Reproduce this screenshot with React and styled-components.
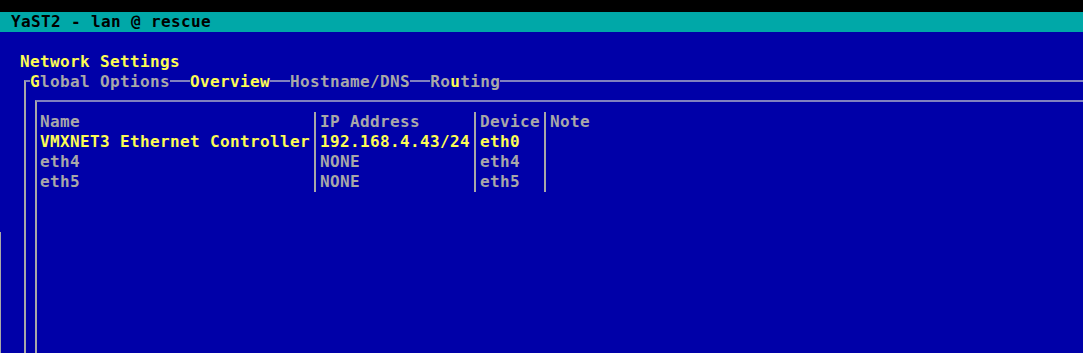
import styled, { createGlobalStyle } from 'styled-components';

//terminal palette
const BLUE = '#0000a8';
const CYAN = '#00a8a8';
const GRAY = '#a8a8a8';
const YELLOW = '#fcfc54';
const RULE = '#8080c0';

const GlobalStyle = createGlobalStyle`
    html, body {
        margin: 0;
        height: 100%;
        background: ${BLUE};
        overflow: hidden;
    }
    #root {
        height: 100%;
    }
`;

const Terminal = styled.div`
    height: 100vh;
    display: flex;
    flex-direction: column;
    font-family: 'DejaVu Sans Mono', 'Liberation Mono', monospace;
    font-size: 16px;
    font-weight: bold;
    letter-spacing: 0.37px;
    line-height: 20px;
    white-space: pre;
`;

const TopStrip = styled.div`
    height: 12px;
    background: #000;
`;

const TitleBar = styled.div`
    height: 20px;
    background: ${CYAN};
    color: #000;
    padding-left: 11px;
`;

const Screen = styled.div`
    flex: 1;
    display: flex;
    background: ${BLUE};
    color: ${GRAY};
    min-height: 0;
`;

// thin frame edge visible at the lower left of the screen
const Edge = styled.div`
    width: 1px;
    margin-top: 200px;
    background: ${GRAY};
`;

const Content = styled.div`
    flex: 1;
    display: flex;
    flex-direction: column;
    padding-top: 20px;
    margin-left: -1px;
`;

const Heading = styled.div`
    height: 20px;
    padding-left: 20px;
    color: ${YELLOW};
`;

const TabBar = styled.div`
    height: 20px;
    display: flex;
    margin-left: 24px;
`;

const Corner = styled.div`
    width: 4px;
    margin-top: 8px;
    border-top: 2px solid ${RULE};
    border-left: 2px solid ${GRAY};
`;

const Rule = styled.div`
    align-self: flex-start;
    margin-top: 8px;
    height: 2px;
    background: ${RULE};
    width: ${p => (p.$fill ? 'auto' : `${p.$cells * 10}px`)};
    flex: ${p => (p.$fill ? 1 : 'none')};
`;

const Tab = styled.span`
    color: ${p => (p.$active ? YELLOW : GRAY)};
`;

const Hot = styled.span`
    color: ${YELLOW};
`;

const Panel = styled.div`
    flex: 1;
    margin-left: 24px;
    border-left: 2px solid ${GRAY};
    padding-left: 9px;
    padding-top: 8px;
    display: flex;
    min-height: 0;
`;

const TableBox = styled.div`
    flex: 1;
    border-top: 2px solid ${RULE};
    border-left: 2px solid ${GRAY};
    padding: 10px 0 0 3px;
`;

const Table = styled.div`
    display: grid;
    grid-template-columns: 270px 10px 150px 10px 60px 10px 40px;
    grid-auto-rows: 20px;
    width: max-content;
`;

const Cell = styled.div`
    color: ${p => (p.$selected ? YELLOW : GRAY)};
    overflow: hidden;
`;

const Sep = styled.div`
    position: relative;
    &::before {
        content: '';
        position: absolute;
        top: 0;
        bottom: 0;
        left: 4px;
        width: 2px;
        background: ${GRAY};
    }
`;

const rows = [
    { name: 'VMXNET3 Ethernet Controller', ip: '192.168.4.43/24', device: 'eth0', note: '', selected: true },
    { name: 'eth4', ip: 'NONE', device: 'eth4', note: '' },
    { name: 'eth5', ip: 'NONE', device: 'eth5', note: '' },
];

const Row = ({ cells, selected }) => (
    <>
        <Cell $selected={selected}>{cells[0]}</Cell>
        <Sep />
        <Cell $selected={selected}>{cells[1]}</Cell>
        <Sep />
        <Cell $selected={selected}>{cells[2]}</Cell>
        <Sep />
        <Cell $selected={selected}>{cells[3]}</Cell>
    </>
);

const App = () => {
    return (
        <>
            <GlobalStyle />
            <Terminal>
                <TopStrip />
                <TitleBar>YaST2 - lan @ rescue</TitleBar>
                <Screen>
                    <Edge />
                    <Content>
                        <Heading>Network Settings</Heading>
                        <TabBar>
                            <Corner />
                            <Tab>
                                <Hot>G</Hot>lobal Options
                            </Tab>
                            <Rule $cells={2} />
                            <Tab $active>Overview</Tab>
                            <Rule $cells={2} />
                            <Tab>Hostname/DNS</Tab>
                            <Rule $cells={2} />
                            <Tab>
                                Ro<Hot>u</Hot>ting
                            </Tab>
                            <Rule $fill />
                        </TabBar>
                        <Panel>
                            <TableBox>
                                <Table>
                                    <Row cells={['Name', 'IP Address', 'Device', 'Note']} />
                                    {rows.map(r => (
                                        <Row
                                            key={r.name}
                                            cells={[r.name, r.ip, r.device, r.note]}
                                            selected={r.selected}
                                        />
                                    ))}
                                </Table>
                            </TableBox>
                        </Panel>
                    </Content>
                </Screen>
            </Terminal>
        </>
    );
};

export default App;
